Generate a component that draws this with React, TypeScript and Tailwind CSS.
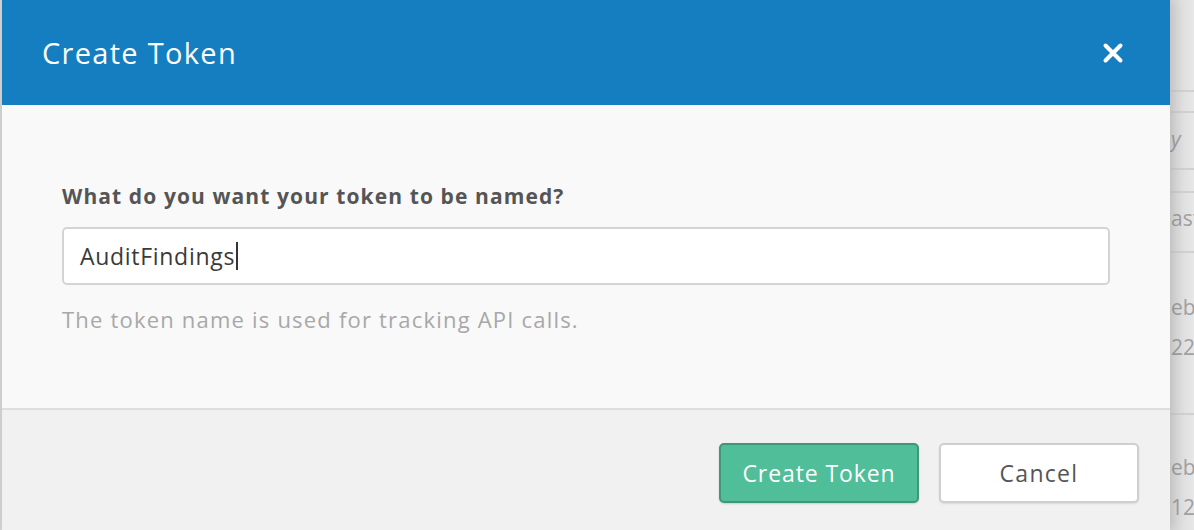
import { X } from 'lucide-react';

const font = { fontFamily: '"Open Sans", "Noto Sans", sans-serif' };

function BackgroundPage() {
  return (
    <div className="flex-1 overflow-hidden bg-gradient-to-r from-[#d8d8d8] to-[#e7e7e7] pl-[1px] text-[21px] leading-[26px] text-[#a0a0a0]">
      <div className="h-[92px] border-b-2 border-[#d0d0d0]" />
      <div className="h-[21px] border-b-2 border-[#d0d0d0]" />
      <div className="flex h-[57px] items-center border-b-2 border-[#d0d0d0] pb-[4px] italic">y</div>
      <div className="h-[23px] border-b-2 border-[#d0d0d0]" />
      <div className="flex h-[60px] items-center border-b-2 border-[#d0d0d0] pb-[8px]">ast</div>
      <div className="flex h-[162px] flex-col border-b-2 border-[#d0d0d0] pt-[34px] leading-[40px]">
        <span>eb</span>
        <span>22</span>
      </div>
      <div className="flex flex-col pt-[32px] leading-[40px]">
        <span>eb</span>
        <span>12</span>
      </div>
    </div>
  );
}

export default function App() {
  return (
    <div className="flex h-[530px] w-[1194px] overflow-hidden bg-[#d6d6d6]" style={font}>
      <div className="w-[2px] bg-[#d3d3d3]" />
      <div className="relative z-10 flex w-[1168px] flex-col shadow-[4px_0_12px_rgba(0,0,0,0.12)]">
        <header className="flex h-[105px] items-center justify-between bg-[#157ec1] pl-[40px] pr-[42px]">
          <h1 className="text-[29px] font-normal tracking-[1.3px] text-white">Create Token</h1>
          <button className="text-white">
            <X size={30} strokeWidth={3.2} />
          </button>
        </header>
        <div className="flex h-[305px] flex-col border-b-2 border-[#dedede] bg-[#f9f9f9] px-[60px] pt-[77px]">
          <label className="text-[21px] font-bold leading-[28px] tracking-[1.1px] text-[#555555]">
            What do you want your token to be named?
          </label>
          <div className="mt-[17px] flex h-[58px] w-[1048px] items-center rounded-[5px] border-2 border-[#d4d4d4] bg-white px-[16px] text-[23px] tracking-[0.7px] text-[#3a3a3a]">
            <span>AuditFindings</span>
            <span className="ml-[1px] h-[28px] w-[2px] bg-[#333]" />
          </div>
          <p className="mt-[18px] text-[22px] tracking-[1.2px] text-[#a8a8a8]">The token name is used for tracking API calls.</p>
        </div>
        <footer className="flex flex-1 items-start justify-end gap-[20px] bg-[#f1f1f1] pr-[31px] pt-[33px]">
          <button className="h-[60px] w-[200px] rounded-[5px] border-2 border-[#3f977a] bg-[#4fbe99] text-[23px] tracking-[0.9px] text-white shadow-[0_1px_2px_rgba(0,0,0,0.15)]">
            Create Token
          </button>
          <button className="h-[60px] w-[200px] rounded-[5px] border-2 border-[#cfcfcf] bg-white text-[23px] tracking-[1.3px] text-[#555555] shadow-[0_1px_2px_rgba(0,0,0,0.1)]">
            Cancel
          </button>
        </footer>
      </div>
      <BackgroundPage />
    </div>
  );
}
